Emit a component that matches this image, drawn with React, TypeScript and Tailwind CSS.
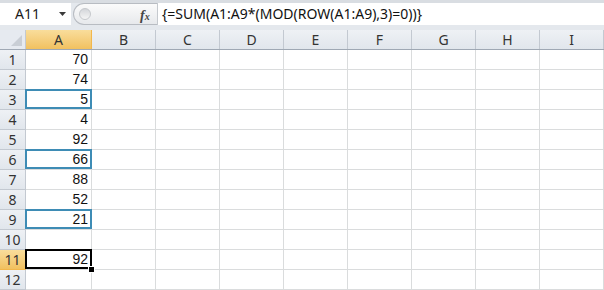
import React from "react";

const cols = ["A", "B", "C", "D", "E", "F", "G", "H", "I"];
const data: Record<number, string> = { 1: "70", 2: "74", 3: "5", 4: "4", 5: "92", 6: "66", 7: "88", 8: "52", 9: "21", 11: "92" };
const blue = new Set([3, 6, 9]);

function colWidth(i: number) {
  return i === 0 ? "w-[66px]" : "w-[64px]";
}

export default function App() {
  const rows = Array.from({ length: 12 }, (_, i) => i + 1);
  return (
    <div className="w-[604px] h-[290px] overflow-hidden bg-white relative" style={{ fontFamily: "'Noto Sans', 'Open Sans', sans-serif" }}>
      {/* formula bar */}
      <div className="h-[30px] bg-[#e4e8ed] border-t-[3px] border-t-[#d9dde2] flex items-start">
        <div className="flex h-[22px] w-full">
          <div className="w-[71px] h-full bg-white flex items-center relative">
            <span className="pl-[15px] text-[14px] text-[#1a1a1a] leading-none">A11</span>
            <svg className="absolute left-[59px] top-[9px]" width="7" height="4" viewBox="0 0 7 4">
              <path d="M0 0 L7 0 L3.5 4 Z" fill="#3a3a3a" />
            </svg>
          </div>
          <div className="w-[2px] h-full bg-[#e4e8ed]" />
          <div className="w-[84px] h-full rounded-l-full border border-r-0 border-[#b8bcc2] bg-gradient-to-b from-[#fbfbfb] to-[#e7e9ec] flex items-center relative">
            <div className="absolute left-[5px] top-[4px] w-[12px] h-[12px] rounded-full bg-gradient-to-b from-[#d4d6da] to-[#f5f5f5] border border-[#c5c8cc]" />
            <span className="absolute left-[66px] top-[1px] text-[14px] italic font-bold text-[#444]" style={{ fontFamily: "'Liberation Serif', serif" }}>
              f<span className="text-[10px]">x</span>
            </span>
          </div>
          <div className="flex-1 h-full bg-white border-l border-[#c5c9ce] flex items-center pl-[4px]">
            <span className="text-[14px] text-[#111] leading-none whitespace-nowrap">{"{=SUM(A1:A9*(MOD(ROW(A1:A9),3)=0))}"}</span>
          </div>
        </div>
      </div>
      {/* column headers */}
      <div className="flex h-[20px] border-b border-[#9fa8b4] bg-[#e6eaf0]">
        <div className="w-[26px] h-full border-r border-[#c3c9d1] relative bg-[#e6eaf0]">
          <svg className="absolute right-[3px] bottom-[3px]" width="11" height="11" viewBox="0 0 11 11">
            <path d="M11 0 L11 11 L0 11 Z" fill="#c9ced5" />
          </svg>
        </div>
        {cols.map((c, i) => (
          <div
            key={c}
            className={`${colWidth(i)} shrink-0 h-full border-r flex items-center justify-center text-[14px] text-[#333] ${
              i === 0 ? "bg-gradient-to-b from-[#f9dd9b] to-[#f1c15f] border-[#f2b74c]" : "bg-gradient-to-b from-[#eef1f5] to-[#e1e6ec] border-[#c3c9d1]"
            }`}
          >
            {c}
          </div>
        ))}
      </div>
      {rows.map((r) => (
        <div key={r} className={`flex h-[20px] relative ${r === 11 ? "z-10" : ""}`}>
          <div
            className={`w-[26px] shrink-0 h-full border-r border-b flex items-center justify-center text-[14px] text-[#333] ${
              r === 11 ? "bg-gradient-to-b from-[#f9dd9b] to-[#f1c15f] border-[#f2b74c]" : "bg-gradient-to-b from-[#eef1f5] to-[#e1e6ec] border-[#c3c9d1]"
            }`}
          >
            {r}
          </div>
          {cols.map((c, i) => (
            <div key={c} className={`${colWidth(i)} shrink-0 h-full border-r border-b border-[#dadcdd] relative`}>
              {i === 0 && data[r] && (
                <div className="absolute inset-0 flex items-center justify-end pr-[3px] text-[14px] text-[#111]" style={{ fontFamily: "'Liberation Sans', sans-serif" }}>
                  {data[r]}
                </div>
              )}
              {i === 0 && blue.has(r) && (
                <div className="absolute -top-[1px] -left-[1px] -right-[1px] -bottom-[0px] border-2 border-[#3e8cb5]" />
              )}
              {i === 0 && r === 11 && (
                <>
                  <div className="absolute -top-[1px] -left-[1px] -right-[1px] -bottom-[0px] border-2 border-black" />
                  <div className="absolute -right-[4px] -bottom-[4px] w-[7px] h-[7px] bg-black border border-white z-20" />
                </>
              )}
            </div>
          ))}
        </div>
      ))}
    </div>
  );
}
